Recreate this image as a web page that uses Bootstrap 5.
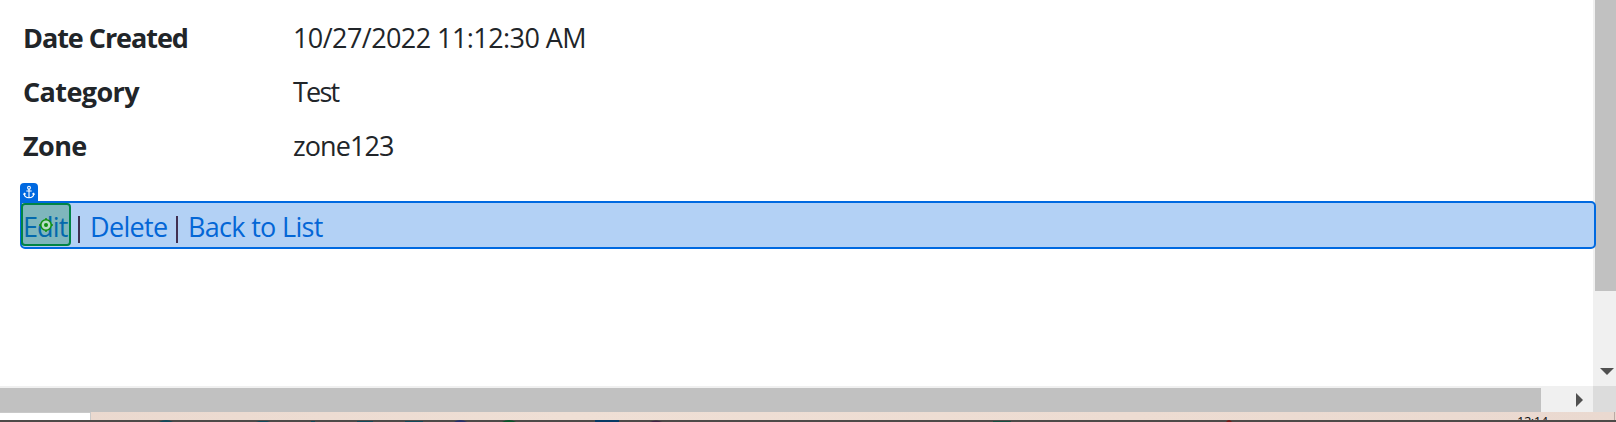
<!DOCTYPE html>
<html lang="en">
<head>
<meta charset="utf-8">
<title>Details</title>
<link href="https://cdn.jsdelivr.net/npm/bootstrap@5.3.0/dist/css/bootstrap.min.css" rel="stylesheet">
<style>
body{font:400 27px/36px "Open Sans","Noto Sans",sans-serif;color:#212529;height:422px;background:#fff}
.details{grid-template-columns:270px 1fr;row-gap:18px;padding:20px 0 0 23px;letter-spacing:-.57px}
.details dt,.details dd{margin:0;line-height:36px;white-space:nowrap}
.details dt{font-weight:700;letter-spacing:-1.05px}
.details .roomy{letter-spacing:-.6px}
.details .tight{letter-spacing:-1.8px}
.details .snug{letter-spacing:-.9px}
.page{height:386px}
.actions{margin:37px -3px 0 20px;height:48px;border:2px solid #0069e0;border-radius:0 5px 5px 5px;background:#b3d1f5;z-index:2}
.actions a{color:#0366d6;text-decoration:none;white-space:nowrap}
.actions .sep{width:2px;height:27px;margin-top:7px;background:#403052}
.line{height:44px;padding-top:6px;letter-spacing:-.68px}
.edit-link{width:50px;height:43px;margin:-6px 0 0 -1px;padding:4px 0 0 0;border:2px solid #008445;border-radius:4px;background:#7fb6bd;letter-spacing:-.9px}
.actions .edit-link{color:#0469ac}
.anchor-tag{left:-2px;top:-20px;width:18px;height:19px;background:#0069e0;border-radius:4px 4px 0 0}
.target{left:16px;top:13px}
.vbar{width:23px;height:386px;background:#f0f0f0;padding-left:2px}
.vthumb{height:291px;background:#c1c1c1}
.hbar{height:26px;background:#f0f0f0}
.hthumb{width:1541px;height:24px;margin-top:2px;background:#c1c1c1}
.corner{width:23px;background:#dcdcdc}
.desk{height:10px;background:linear-gradient(90deg,#ead8ce,#efdfd5 35%,#eddcd2 70%,#ead9d0)}
.pane{width:91px;height:8px;background:#fff;border-top:1px solid #c9c9c9;border-right:1px solid #c9c9c9}
.clock{left:1517px;top:3px;font:13px/13px "Open Sans",sans-serif;color:#111;letter-spacing:-.5px}
.task{left:0;bottom:0}
</style>
<script src="https://cdn.jsdelivr.net/npm/bootstrap@5.3.0/dist/js/bootstrap.bundle.min.js"></script>
</head>
<body class="overflow-hidden m-0">
<div class="page d-flex">
  <main class="flex-grow-1">
    <dl class="details d-grid m-0">
      <dt>Date Created</dt><dd>10/27/2022 11:12:30 AM</dd>
      <dt class="roomy">Category</dt><dd class="tight">Test</dd>
      <dt class="roomy">Zone</dt><dd class="snug">zone123</dd>
    </dl>
    <div class="actions position-relative">
      <span class="anchor-tag position-absolute"><svg class="d-block" width="18" height="19" fill="none" stroke="#fff" stroke-width="1.1"><circle cx="9" cy="4.7" r="1.4"/><path d="M9 6v8.7M6.3 8h5.4M4.2 10.4c.1 2.8 2 4.3 4.8 4.3s4.700-1.500 4.800-4.300M3.500 11.700l.8-1.500 1.400 1M14.500 11.700l-.8-1.500-1.400 1"/></svg></span>
      <div class="line d-flex">
        <a href="#" class="edit-link position-relative">Edit<svg class="target position-absolute" width="14" height="14" viewBox="0 0 14 14"><circle cx="7" cy="7" r="5.200" fill="#b9dcc4" stroke="#109010" stroke-width="1.500"/><circle cx="7" cy="7" r="2" fill="#109010"/><path d="M7 0v2M7 12v2M0 7h2M12 7h2" stroke="#109010" stroke-width="1.500"/></svg></a>
        <span class="sep" style="margin-left:7px"></span>
        <a href="#" style="margin-left:10px;width:86px">Delete</a>
        <span class="sep"></span>
        <a href="#" style="margin-left:10px">Back to List</a>
      </div>
    </div>
  </main>
  <div class="vbar flex-shrink-0"><div class="vthumb"></div></div>
</div>
<div class="hbar d-flex">
  <div class="hthumb"></div>
  <div class="flex-grow-1"><svg class="d-block" width="52" height="26"><path d="M35 7v14l7-7z" fill="#505050"/></svg></div>
  <div class="corner"></div>
</div>
<div class="desk position-relative overflow-hidden">
  <div class="pane"></div>
  <span class="clock position-absolute">12:14</span>
  <svg class="task position-absolute" width="1616" height="10"><path d="M1614.500 0v8" stroke="#b9aaa4"/><path d="M0 8h1616v2H0z" fill="#4e4a48"/><g fill="#124a5b"><path d="M159 10q7-4 14 0zM256 10l3-1h8l3 1zM311 10v-1h4v1zM357 10V9h16v1zM405 10V9h18v1z"/></g><path d="M454 10q6-4 13 0z" fill="#27306b"/><path d="M502 10q7-4 14 0z" fill="#0b552b"/><path d="M595 8h24v2h-24z" fill="#073a65"/><path d="M650 10q6-3 12 0z" fill="#402545"/><path d="M993 10V9h18v1z" fill="#174f42"/><path d="M1226 10q3-4 6 0z" fill="#781a17"/></svg>
</div>
<svg class="position-absolute" style="left:1600px;top:368px" width="14" height="7"><path d="M0 0h14L7 7z" fill="#505050"/></svg>
</body>
</html>
